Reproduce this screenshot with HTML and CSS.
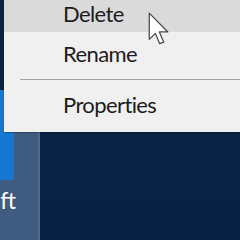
FILE: index.html
```html
<!DOCTYPE html>
<html>
<head>
<meta charset="utf-8">
<link rel="stylesheet" href="styles.css">
</head>
<body>
<div class="desktop">
  <div class="side">
    <div class="side-top"></div>
    <div class="side-panel">
      <div class="tile"></div>
      <div class="label"><span>Microsoft</span></div>
    </div>
  </div>
  <div class="edge"></div>
  <div class="wall"></div>
</div>
<div class="menu">
  <div class="item active">Delete</div>
  <div class="item">Rename</div>
  <div class="sep"></div>
  <div class="item">Properties</div>
</div>
<svg class="cursor" width="22" height="36" viewBox="0 0 12 20">
  <path d="M0.6 0.6 L0.6 15.2 L4 11.9 L6.4 17.6 L8.6 16.7 L6.2 11.1 L10.9 11.1 Z" fill="#ffffff" stroke="#4a4a4a" stroke-width="0.7" stroke-linejoin="round"/>
</svg>
</body>
</html>
```

FILE: styles.css
```css
html, body {
  margin: 0;
  padding: 0;
  width: 240px;
  height: 240px;
  overflow: hidden;
}
body {
  position: relative;
  font-family: "Lato", "Noto Sans", sans-serif;
  background: #0b2548;
}
.desktop {
  display: flex;
  width: 240px;
  height: 240px;
}
.side {
  width: 38px;
  display: flex;
  flex-direction: column;
}
.side-top {
  height: 90px;
  background: #0d2342;
}
.side-panel {
  flex: 1;
  background: #3f5b80;
  display: flex;
  flex-direction: column;
}
.tile {
  width: 14px;
  height: 90px;
  background: #1677d2;
}
.label {
  width: 16px;
  display: flex;
  justify-content: flex-end;
  overflow: hidden;
  color: #ffffff;
  font-size: 23px;
  line-height: 30px;
  margin-top: 5px;
  white-space: nowrap;
}
.edge {
  width: 2px;
  background: #52698c;
}
.wall {
  flex: 1;
  background: linear-gradient(180deg, #0c2a52 0%, #0a2447 40%, #082041 100%);
}
.menu {
  position: absolute;
  left: 4px;
  top: -8px;
  width: 240px;
  background: #f0f0f0;
  padding-bottom: 9px;
  box-shadow: 0 1px 1px rgba(0,0,0,0.25);
  color: #1c1c1c;
  font-size: 22px;
  letter-spacing: -0.6px;
}
.item {
  height: 40px;
  box-sizing: border-box;
  padding: 4px 0 0 59px;
  line-height: 36px;
}
.item.active {
  background: #dadada;
}
.sep {
  height: 1px;
  margin: 7px 0 3px 16px;
  background: #a3a3a3;
}
.cursor {
  position: absolute;
  left: 148px;
  top: 12px;
}
```
